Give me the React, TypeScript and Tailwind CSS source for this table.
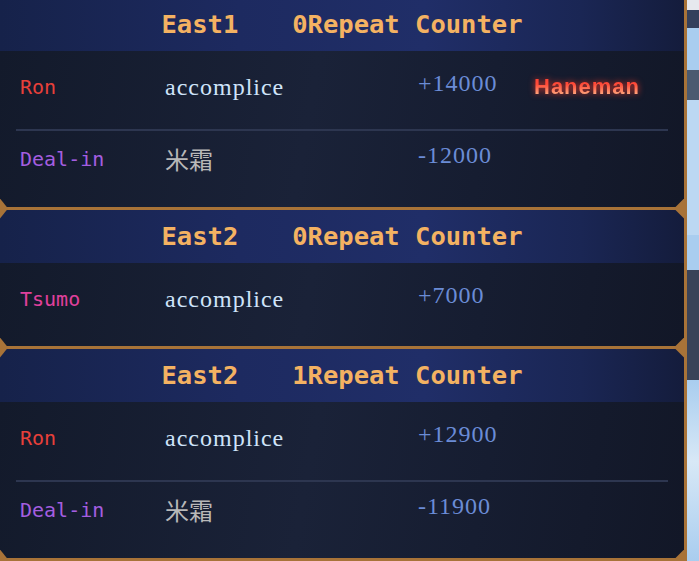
const rounds = [
  {
    round: "East1",
    repeat: "0Repeat Counter",
    rows: [
      { label: "Ron", labelColor: "text-[#e8403a]", name: "accomplice", points: "+14000", tag: "Haneman" },
      { label: "Deal-in", labelColor: "text-[#a45ee0]", name: "米霜", cjk: true, points: "-12000" },
    ],
  },
  {
    round: "East2",
    repeat: "0Repeat Counter",
    rows: [{ label: "Tsumo", labelColor: "text-[#e0409c]", name: "accomplice", points: "+7000" }],
  },
  {
    round: "East2",
    repeat: "1Repeat Counter",
    rows: [
      { label: "Ron", labelColor: "text-[#e8403a]", name: "accomplice", points: "+12900" },
      { label: "Deal-in", labelColor: "text-[#a45ee0]", name: "米霜", cjk: true, points: "-11900" },
    ],
  },
];

type Round = (typeof rounds)[number];

function GoldLine() {
  return (
    <div className="relative h-[3px] shrink-0 bg-[#a87338]">
      <div className="absolute left-0 top-1/2 z-10 h-[20px] w-[8px] -translate-y-1/2 bg-[#a87338] [clip-path:polygon(0_0,100%_50%,0_100%)]" />
      <div className="absolute right-0 top-1/2 z-10 h-[20px] w-[10px] -translate-y-1/2 bg-[#a87338] [clip-path:polygon(100%_0,0_50%,100%_100%)]" />
    </div>
  );
}

function RoundCard({ data, first }: { data: Round; first?: boolean }) {
  return (
    <div className={first ? "-mt-[2px]" : ""}>
      <div className="flex h-[53px] items-center justify-center gap-[54px] bg-[linear-gradient(90deg,#16224a_0%,#1d2a60_35%,#202e68_62%,#1a2654_85%,#141c3c_100%)] font-['DejaVu_Sans_Mono',monospace] text-[25.5px] font-bold text-[#f4b262]">
        <span>{data.round}</span>
        <span>{data.repeat}</span>
      </div>
      <div className="bg-[linear-gradient(100deg,#131a2b_0%,#1a2238_45%,#161d31_70%,#121727_100%)]">
        {data.rows.map((r, i) => {
          const last = i === data.rows.length - 1;
          return (
            <div key={i}>
              {i > 0 && <div className="mx-[16px] h-[2px] bg-[#2d3650]" />}
              <div
                className={`grid grid-cols-[145px_253px_116px_1fr] items-center pl-[20px] ${
                  i === 0 ? "pt-[22px]" : "pt-[14px]"
                } ${last ? (i === 0 ? "pb-[33px]" : "pb-[34px]") : "pb-[28px]"}`}
              >
                <span className={`font-['DejaVu_Sans_Mono',monospace] text-[20px] leading-[28px] ${r.labelColor}`}>
                  {r.label}
                </span>
                {"cjk" in r && r.cjk ? (
                  <span className="font-['Noto_Sans_CJK_SC',sans-serif] text-[24px] leading-[28px] text-[#b8b8b8]">
                    {r.name}
                  </span>
                ) : (
                  <span className="font-['Liberation_Serif',serif] text-[24px] leading-[28px] tracking-[1px] text-[#cfe4fa]">
                    {r.name}
                  </span>
                )}
                <span className="-mt-[8px] font-['Liberation_Serif',serif] text-[24px] leading-[28px] tracking-[1px] text-[#6b8cd6]">
                  {r.points}
                </span>
                {"tag" in r && r.tag ? (
                  <span className="bg-[linear-gradient(180deg,#ff3b30_0%,#ff4a38_40%,#ffe0a8_100%)] bg-clip-text font-['Liberation_Sans',sans-serif] text-[22px] font-bold leading-[28px] tracking-[1px] text-transparent [filter:drop-shadow(0_0_3px_rgba(255,60,40,0.85))]">
                    {r.tag}
                  </span>
                ) : (
                  <span />
                )}
              </div>
            </div>
          );
        })}
      </div>
    </div>
  );
}

export default function App() {
  return (
    <div className="flex h-[561px] w-[699px] overflow-hidden bg-[#a9cdef]">
      <div className="flex w-[687px] shrink-0 flex-col border-r-[3px] border-[#a87338]">
        {rounds.map((r, i) => (
          <div key={i}>
            <RoundCard data={r} first={i === 0} />
            <GoldLine />
          </div>
        ))}
      </div>
      <div className="flex flex-1 flex-col">
        <div className="h-[10px] bg-[#e6e8ee]" />
        <div className="h-[18px] bg-[#34405c]" />
        <div className="h-[42px] bg-[#a9cdef]" />
        <div className="h-[30px] bg-[#4b5a70]" />
        <div className="h-[135px] bg-[#bcd8f2]" />
        <div className="h-[35px] bg-[#a9cdef]" />
        <div className="h-[110px] bg-[#3a4358]" />
        <div className="flex-1 bg-[linear-gradient(180deg,#a9cdef_0%,#d8e8f6_45%,#a9cdef_100%)]" />
      </div>
    </div>
  );
}
